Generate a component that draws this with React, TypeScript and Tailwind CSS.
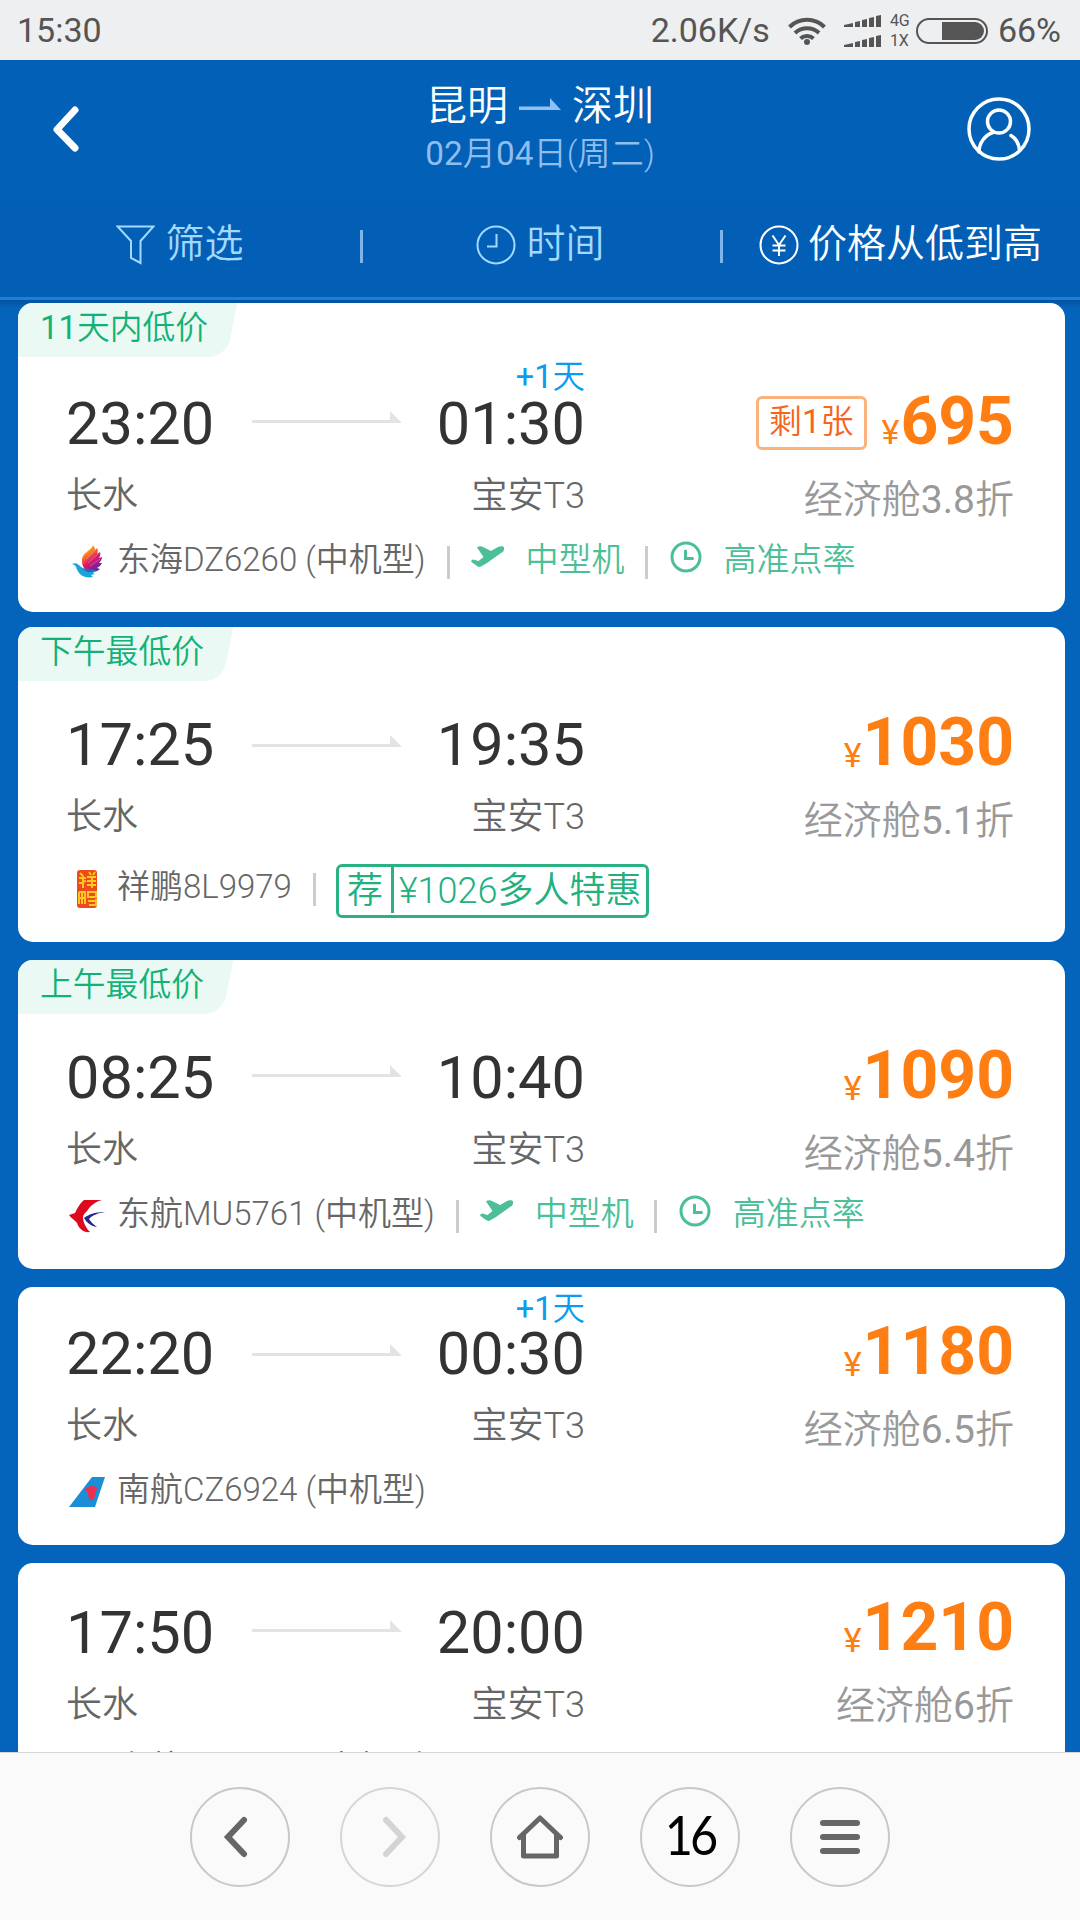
import React from 'react';

type Flight = {
  tag?: string;
  depart: string;
  arrive: string;
  nextDay?: string;
  left?: string;
  price: string;
  discount: string;
  logo: React.ReactNode;
  airline: string;
  perks?: boolean;
  promo?: string;
  // vertical rhythm of the card
  card: string;
  arrow: string;
  fare: string;
  yuan: string;
  info: string;
};

const DonghaiLogo = () => (
  <svg width="36" height="40" viewBox="0 0 36 40" className="shrink-0">
    <defs>
      <linearGradient id="dz-wing" x1="0.2" y1="0" x2="0.75" y2="1">
        <stop offset="0.1" stopColor="#ffc61a" />
        <stop offset="0.35" stopColor="#f7652a" />
        <stop offset="0.55" stopColor="#e0186c" />
        <stop offset="0.8" stopColor="#8a1f8f" />
        <stop offset="1" stopColor="#4a2f9c" />
      </linearGradient>
    </defs>
    <path
      d="M24 3c-1 5-10 7-11 14 0 4 0 6 2 9 4 5 12 5 16 1l-3-1c2-1 4-3 5-5h-3c2-2 3-4 3-6l-3 1c1-2 2-4 1-6l-3 2c1-2 1-4 0-6l-2 2c0-2-1-4-2-5z"
      fill="url(#dz-wing)"
    />
    <path d="M26 8l-9 9M29 12l-10 9M31 17l-10 7" stroke="#fff" strokeWidth="0.6" opacity="0.45" />
    <path d="M3 22c4-2 6 0 8 2 3 3 6 4 17 4-2 1-3 2-4 3l2 1-4 1 2 2c-5 1-9 0-12-2-3-3-4-5-5-8-1-2-2-2-4-3z" fill="#19a3dd" />
    <path d="M12 25c4 3 9 4 16 3-5 3-11 3-16-3z" fill="#3550a8" />
  </svg>
);

const XiangpengLogo = () => (
  <svg width="36" height="42" viewBox="0 0 36 42" className="shrink-0">
    <rect x="8" y="2" width="20" height="38" rx="3" fill="#ee4a1c" />
    <path
      d="M11 5l3 3M10 10h7M14 8v12M10 15l7-2M20 4l2 3M26 4l-2 3M18 9h9M18 13h9M18 17h9M23 8v12M10 24h6v12M10 24v12M13 24v12M10 30h6M19 24h8v5h-8zM19 33h9M20 37h6M27 31v7"
      stroke="#ffc81f"
      strokeWidth="2"
      fill="none"
    />
  </svg>
);

const EasternLogo = () => (
  <svg width="36" height="36" viewBox="0 0 36 36" className="shrink-0">
    <path d="M15 2h18c-7 2-12 6-15 11-2 2-4 4-4 6 0 5 3 11 7 15-6 1-11-3-13-9-1-2-5-4-8-8l6-2c3-6 5-10 9-13z" fill="#dc0a1c" />
    <path d="M36 14c-9 0-16 2-21 6 3 5 7 8 13 9-3-2-6-5-8-8 4-4 9-6 16-7z" fill="#27278c" />
  </svg>
);

const SouthernLogo = () => (
  <svg width="36" height="36" viewBox="0 0 36 36" className="shrink-0">
    <path d="M23 3h13L26 33H0z" fill="#1a8ed6" />
    <path
      d="M22 11c1 0 2 1 2 2 2-1 4 0 5 2l-3 2c1 3 0 5-1 7-1 3-5 3-5 0-1-2-1-4-1-6l-3-2c1-2 3-3 4-3 0-1 1-2 2-2z"
      fill="#ee2d4f"
    />
  </svg>
);

const flights: Flight[] = [
  {
    tag: '11天内低价',
    depart: '23:20',
    arrive: '01:30',
    nextDay: '-top-[33px]',
    left: '剩1张',
    price: '695',
    discount: '经济舱3.8折',
    logo: <DonghaiLogo />,
    airline: '东海DZ6260 (中机型)',
    perks: true,
    card: 'h-[309px] pt-[91px]',
    arrow: 'mt-[17px]',
    fare: '-mt-[2px]',
    yuan: '',
    info: 'mt-[8px]',
  },
  {
    tag: '下午最低价',
    depart: '17:25',
    arrive: '19:35',
    price: '1030',
    discount: '经济舱5.1折',
    logo: <XiangpengLogo />,
    airline: '祥鹏8L9979',
    promo: '¥1026多人特惠',
    card: 'mt-[15px] h-[315px] pt-[88px]',
    arrow: 'mt-[20px]',
    fare: '-mt-[2px]',
    yuan: 'translate-y-[2px]',
    info: 'mt-[14px]',
  },
  {
    tag: '上午最低价',
    depart: '08:25',
    arrive: '10:40',
    price: '1090',
    discount: '经济舱5.4折',
    logo: <EasternLogo />,
    airline: '东航MU5761 (中机型)',
    perks: true,
    card: 'mt-[18px] h-[309px] pt-[88px]',
    arrow: 'mt-[17px]',
    fare: '-mt-[2px]',
    yuan: 'translate-y-[2px]',
    info: 'mt-[8px]',
  },
  {
    depart: '22:20',
    arrive: '00:30',
    nextDay: '-top-[31px]',
    price: '1180',
    discount: '经济舱6.5折',
    logo: <SouthernLogo />,
    airline: '南航CZ6924 (中机型)',
    card: 'mt-[18px] h-[258px] pt-[37px]',
    arrow: 'mt-[20px]',
    fare: '-mt-[2px]',
    yuan: 'translate-y-[2px]',
    info: 'mt-[8px]',
  },
  {
    depart: '17:50',
    arrive: '20:00',
    price: '1210',
    discount: '经济舱6折',
    logo: <EasternLogo />,
    airline: '东航MU5763 (中机型)',
    card: 'mt-[18px] h-[258px] pt-[40px]',
    arrow: 'mt-[17px]',
    fare: '-mt-[5px]',
    yuan: 'translate-y-[2px]',
    info: 'mt-[10px]',
  },
];

// Digits sit one weight above the Chinese characters around them
const MixedText = ({ text }: { text: string }) => (
  <>
    {text.split(/([+\d.]+)/).map((part, i) => (
      <span key={i} className={i % 2 ? 'font-normal' : 'font-[350]'}>
        {part}
      </span>
    ))}
  </>
);

const SignalBars = () => (
  <svg width="38" height="12" viewBox="0 0 38 12" fill="#555">
    <path d="M0 12v-2l9-2v4zM11 12V7l5-1v6zM18 12V5l5-1v8zM25 12V3l5-1v10zM32 12V1l5-1v12z" />
  </svg>
);

const StatusBar = () => (
  <div className="flex h-[60px] shrink-0 items-center bg-[#eeeff1] pl-[17px] pr-[19px] pt-px text-[34px] text-[#555]">
    <span>15:30</span>
    <span className="ml-auto">2.06K/s</span>
    <svg width="38" height="30" viewBox="0 0 38 30" className="ml-[18px]" fill="none" stroke="#555" strokeWidth="4">
      <path d="M1.500 11a25 25 0 0 1 35 0M7 17a17.500 17.500 0 0 1 24 0M12.500 22.500a9.500 9.500 0 0 1 13 0" />
      <circle cx="19" cy="26" r="3" fill="#555" stroke="none" />
    </svg>
    <div className="ml-[18px] flex flex-col gap-[8px]">
      <SignalBars />
      <SignalBars />
    </div>
    <div className="ml-[8px] flex w-[26px] flex-col text-[16px] leading-[20px]">
      <span>4G</span>
      <span>1X</span>
    </div>
    <div className="flex h-[26px] w-[72px] justify-end rounded-full border-2 border-[#555] p-[2px]">
      <div className="w-[42px] rounded-r-full bg-[#555]" />
    </div>
    <span className="ml-[10px]">66%</span>
  </div>
);

const Header = () => (
  <header className="flex h-[137px] shrink-0 items-center bg-[#0260b6]">
    <div className="flex w-[300px] pl-[51px]">
      <svg width="30" height="48" viewBox="0 0 30 48" fill="none" stroke="#fff" strokeWidth="7" strokeLinecap="round" strokeLinejoin="round">
        <path d="M24 5L6 24.500L24 43" />
      </svg>
    </div>
    <div className="flex flex-1 flex-col items-center">
      <div className="-mt-[3px] flex h-[54px] items-center text-[41px] leading-[52px] text-white">
        <span className="font-[350]">昆明</span>
        <svg width="42" height="12" viewBox="0 0 42 12" className="mx-[11px] mt-[-4px]" fill="#8fc2f3">
          <path d="M0 8.500h31V0l11 12H0z" />
        </svg>
        <span className="font-[350]">深圳</span>
      </div>
      <div className="h-[42px] text-[33.3px] leading-[42px] text-[#8fbeee]">
        <MixedText text="02月04日(周二)" />
      </div>
    </div>
    <div className="flex w-[300px] justify-end pr-[49px]">
      <svg width="64" height="64" viewBox="0 0 64 64" fill="none" stroke="#fff" strokeWidth="3.500">
        <circle cx="32" cy="32" r="30" />
        <circle cx="32" cy="24.500" r="11.500" />
        <path d="M12 55c0-9 6-17 14-19.500M44 38.500c5 3 8 8.500 8.500 15" strokeLinecap="round" />
      </svg>
    </div>
  </header>
);

const FilterBar = () => (
  <div className="flex h-[103px] shrink-0 items-center border-b-[3px] border-[#1d7fda] bg-[#025fb5] pb-[6px] text-[39px] font-[350] leading-[52px] text-[#a3d8ff]">
    <div className="flex w-[360px] items-center justify-center gap-[10px]">
      <svg width="39" height="40" viewBox="0 0 39 40" className="mt-[2px]" fill="none" stroke="currentColor" strokeWidth="2">
        <path d="M1.500 1.500h36L24.500 16v22L15 33V16z" />
      </svg>
      <span>筛选</span>
    </div>
    <div className="mt-[4px] h-[33px] w-[3px] bg-[#7db5ea]" />
    <div className="flex w-[357px] items-center justify-center gap-[10px] pr-[2px]">
      <svg width="40" height="40" viewBox="0 0 40 40" className="mt-[2px]" fill="none" stroke="currentColor" strokeWidth="2">
        <circle cx="20" cy="20" r="18.500" />
        <path d="M20.500 9v12.500H11" />
      </svg>
      <span>时间</span>
    </div>
    <div className="mt-[4px] h-[33px] w-[3px] bg-[#7db5ea]" />
    <div className="flex w-[357px] items-center justify-center gap-[9px] pr-[2px] text-white">
      <svg width="40" height="40" viewBox="0 0 40 40" className="mt-[2px]" fill="none" stroke="currentColor" strokeWidth="2">
        <circle cx="20" cy="20" r="18.500" />
        <path d="M13.500 10.500L20 20l6.500-9.500M20 20v11M13.500 20.500h13M13.500 25.500h13" />
      </svg>
      <span>价格从低到高</span>
    </div>
  </div>
);

const Divider = () => <span className="mt-[5px] h-[33px] w-[3px] shrink-0 bg-[#ccc]" />;

const FlightCard = ({ flight }: { flight: Flight }) => (
  <article className={`relative shrink-0 overflow-hidden rounded-[15px] bg-white pl-[48px] pr-[51px] ${flight.card}`}>
    {flight.tag && (
      <div className="absolute left-0 top-0 h-[54px] pl-[22px] pr-[29px]">
        <div className="absolute inset-y-0 -left-4 right-[5px] -skew-x-[11deg] rounded-br-[18px] bg-[#ebf9f5]" />
        <span className="relative block text-[32.8px] leading-[51px] text-[#12b277]">
          <MixedText text={flight.tag} />
        </span>
      </div>
    )}

    <div className="flex justify-between">
      <div className="w-[519px]">
        <div className="flex h-[60px] text-[59.5px] leading-[60px] text-[#333]">
          <span className="w-[149px]">{flight.depart}</span>
          <svg width="150" height="12" viewBox="0 0 150 12" className={`ml-[37px] ${flight.arrow}`} fill="#e3e3e3">
            <path d="M0 9h138V0l12 12H0z" />
          </svg>
          <div className="relative ml-auto">
            {flight.arrive}
            {flight.nextDay && (
              <span className={`absolute right-0 whitespace-nowrap text-[32.5px] leading-[32px] text-[#0d9bef] ${flight.nextDay}`}>
                <MixedText text="+1天" />
              </span>
            )}
          </div>
        </div>
        <div className="mt-[17px] flex h-[50px] justify-between text-[36px] font-[350] leading-[50px] text-[#666]">
          <span>长水</span>
          <span>宝安T3</span>
        </div>
      </div>

      <div className={`flex flex-col items-end ${flight.fare}`}>
        <div className="flex h-[60px] items-center">
          {flight.left && (
            <span className="mr-[15px] mt-[2px] h-[54px] rounded-[6px] border-[3px] border-[#fbb27c] px-[10px] text-[33px] leading-[46px] text-[#f4661b]">
              <MixedText text={flight.left} />
            </span>
          )}
          <span className="flex items-baseline text-[#ff7e14]">
            <span className={`mr-[1px] text-[34px] leading-none ${flight.yuan}`}>¥</span>
            <span className="text-[66px] font-bold leading-[60px]">{flight.price}</span>
          </span>
        </div>
        <div className="mt-[23px] h-[50px] text-[39px] leading-[50px] text-[#999]">
          <MixedText text={flight.discount} />
        </div>
      </div>
    </div>

    <div className={`flex h-[54px] items-center whitespace-nowrap text-[33px] font-[350] leading-[54px] ${flight.info}`}>
      <span className="ml-[3px] mt-[4px]">{flight.logo}</span>
      <span className="ml-[12px] mr-[21px] text-[#666]">{flight.airline}</span>
      {flight.perks && (
        <>
          <Divider />
          <svg width="34" height="22" viewBox="0 0 34 22" className="-mt-[6px] ml-[21px]" fill="#4dbf98">
            <path d="M6 1.500c2-1.500 4-1.500 6-.5l8 4L27 1c3-1.500 7-1 6 2 0 2-1 3-3 4L16 17l-6 3.500c-2 1-3 0-4-.5L.5 16c-1-1 .5-2.500 2-2.500l5 1.500 5-4z" />
          </svg>
          <span className="ml-[21px] mr-[20px] text-[#4dbf98]">中型机</span>
          <Divider />
          <svg width="32" height="32" viewBox="0 0 32 32" className="-mt-[6px] ml-[22px]" fill="none" stroke="#4dbf98" strokeWidth="3">
            <circle cx="16" cy="16" r="14" />
            <path d="M15.500 10v7.500h7" strokeLinecap="round" />
          </svg>
          <span className="ml-[22px] text-[#4dbf98]">高准点率</span>
        </>
      )}
      {flight.promo && (
        <>
          <Divider />
          <span className="ml-[20px] mt-[7px] flex h-[54px] rounded-[6px] border-[3px] border-[#2bb283] text-[36px] leading-[48px] text-[#22b17e]">
            <span className="px-[8px]">荐</span>
            <span className="h-[46px] w-[3px] bg-[#2bb283]" />
            <span className="px-[5px]">{flight.promo}</span>
          </span>
        </>
      )}
    </div>
  </article>
);

const NavButton = ({ children, muted }: { children: React.ReactNode; muted?: boolean }) => (
  <button
    className={`flex size-[100px] items-center justify-center rounded-full border-2 ${
      muted ? 'border-[#d6d6d6] text-[#d4d4d4]' : 'border-[#c8c8c8] text-[#666]'
    }`}
  >
    {children}
  </button>
);

const BottomNav = () => (
  <nav className="flex h-[168px] shrink-0 items-center justify-center gap-[50px] border-t border-[#d6d6d6] bg-[#fafafa]">
    <NavButton>
      <svg width="26" height="42" viewBox="0 0 26 42" className="-ml-[8px]" fill="none" stroke="currentColor" strokeWidth="6" strokeLinecap="round">
        <path d="M21 4L5 21l16 17" />
      </svg>
    </NavButton>
    <NavButton muted>
      <svg width="26" height="42" viewBox="0 0 26 42" className="ml-[8px]" fill="none" stroke="currentColor" strokeWidth="6" strokeLinecap="round">
        <path d="M5 4l16 17L5 38" />
      </svg>
    </NavButton>
    <NavButton>
      <svg width="46" height="44" viewBox="0 0 46 44" fill="none" stroke="currentColor" strokeWidth="5" strokeLinecap="round" strokeLinejoin="round">
        <path d="M2.500 22.500L23 3l20.500 19.500" />
        <path d="M6.500 20v21h33V20" />
      </svg>
    </NavButton>
    <NavButton>
      <span className="-mt-[4px] scale-x-90 font-['Lato'] text-[54px] leading-none tracking-[-0.06em] text-black">16</span>
    </NavButton>
    <NavButton>
      <span className="flex w-[40px] flex-col gap-[8px]">
        <span className="h-[6px] rounded-full bg-current" />
        <span className="h-[6px] rounded-full bg-current" />
        <span className="h-[6px] rounded-full bg-current" />
      </span>
    </NavButton>
  </nav>
);

export default function App() {
  return (
    <div className="flex h-[1920px] w-[1080px] flex-col overflow-hidden bg-[#0465bf] font-['Roboto','Noto_Sans_CJK_SC',sans-serif]">
      <StatusBar />
      <Header />
      <FilterBar />
      <main className="flex h-[1452px] shrink-0 flex-col overflow-hidden bg-[linear-gradient(#04529e,#0463bb_8px)] pl-[18px] pr-[15px] pt-[3px]">
        {flights.map((flight) => (
          <FlightCard key={flight.depart} flight={flight} />
        ))}
      </main>
      <BottomNav />
    </div>
  );
}
